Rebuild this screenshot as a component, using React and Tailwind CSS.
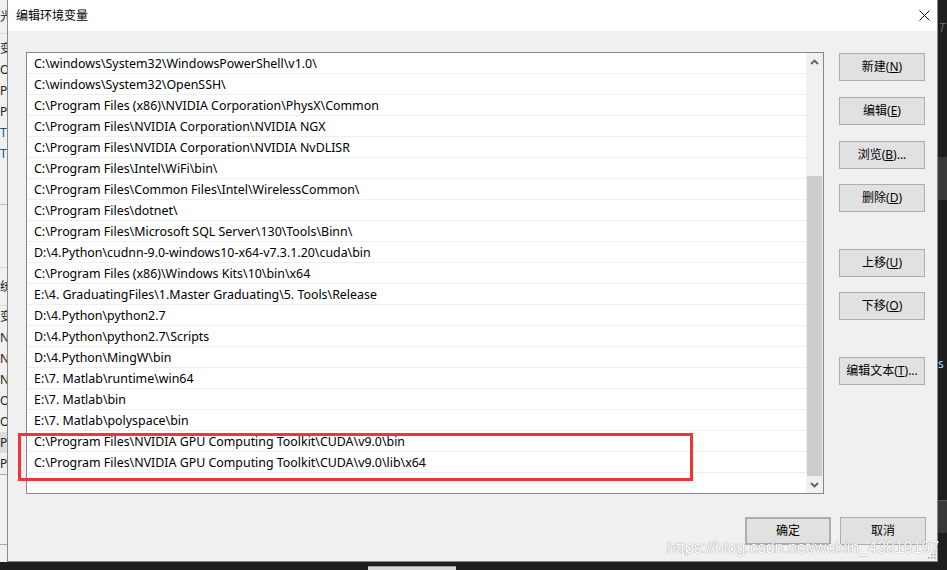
import React from 'react';

const paths = [
  'C:\\windows\\System32\\WindowsPowerShell\\v1.0\\',
  'C:\\windows\\System32\\OpenSSH\\',
  'C:\\Program Files (x86)\\NVIDIA Corporation\\PhysX\\Common',
  'C:\\Program Files\\NVIDIA Corporation\\NVIDIA NGX',
  'C:\\Program Files\\NVIDIA Corporation\\NVIDIA NvDLISR',
  'C:\\Program Files\\Intel\\WiFi\\bin\\',
  'C:\\Program Files\\Common Files\\Intel\\WirelessCommon\\',
  'C:\\Program Files\\dotnet\\',
  'C:\\Program Files\\Microsoft SQL Server\\130\\Tools\\Binn\\',
  'D:\\4.Python\\cudnn-9.0-windows10-x64-v7.3.1.20\\cuda\\bin',
  'C:\\Program Files (x86)\\Windows Kits\\10\\bin\\x64',
  'E:\\4. GraduatingFiles\\1.Master Graduating\\5. Tools\\Release',
  'D:\\4.Python\\python2.7',
  'D:\\4.Python\\python2.7\\Scripts',
  'D:\\4.Python\\MingW\\bin',
  'E:\\7. Matlab\\runtime\\win64',
  'E:\\7. Matlab\\bin',
  'E:\\7. Matlab\\polyspace\\bin',
  'C:\\Program Files\\NVIDIA GPU Computing Toolkit\\CUDA\\v9.0\\bin',
  'C:\\Program Files\\NVIDIA GPU Computing Toolkit\\CUDA\\v9.0\\lib\\x64',
];

// side buttons: label, mnemonic, suffix, top margin
const sideButtons = [
  { label: '新建', key: 'N', mt: 'mt-[1px]' },
  { label: '编辑', key: 'E', mt: 'mt-[16px]' },
  { label: '浏览', key: 'B', tail: '...', mt: 'mt-[16px]' },
  { label: '删除', key: 'D', mt: 'mt-[15px]' },
  { label: '上移', key: 'U', mt: 'mt-[37px]' },
  { label: '下移', key: 'O', mt: 'mt-[15px]' },
  { label: '编辑文本', key: 'T', tail: '...', mt: 'mt-[37px]' },
];

function WinButton({ children, className = '' }) {
  return (
    <div
      className={`w-[86px] h-[28px] flex items-center justify-center bg-[#e1e1e1] border border-[#adadad] text-[12px] text-black ${className}`}
    >
      {children}
    </div>
  );
}

function Chevron({ up }) {
  return (
    <svg width="9" height="6" viewBox="0 0 9 6">
      <path
        d={up ? 'M1 5 L4.5 1.5 L8 5' : 'M1 1 L4.5 4.5 L8 1'}
        fill="none"
        stroke="#606060"
        strokeWidth="1.8"
      />
    </svg>
  );
}

function LeftStrip() {
  const top = ['变', 'Or', 'Pa', 'Py', 'TE', 'TM'];
  const bottom = ['变', 'NV', 'NV', 'NV', 'OI', 'OS'];
  return (
    <div className="w-[7px] h-full overflow-hidden bg-[#f0f0f0] flex flex-col text-[12px] leading-none text-[#222] whitespace-nowrap">
      <div className="h-[33px] flex items-center">光</div>
      <div className="h-[1px] bg-[#d9d9d9]" />
      <div className="h-[4px]" />
      {top.map((t, i) => (
        <div key={i} className={`h-[21px] flex items-center ${i > 3 ? 'text-[#1b4f8c]' : ''}`}>
          {t}
        </div>
      ))}
      <div className="h-[40px]" />
      <div className="h-[1px] bg-[#bdbdbd]" />
      <div className="h-[62px]" />
      <div className="h-[1px] bg-[#d9d9d9]" />
      <div className="h-[37px] flex items-center">统</div>
      <div className="h-[1px] bg-[#d9d9d9]" />
      {bottom.map((t, i) => (
        <div key={i} className="h-[21px] flex items-center">
          {t}
        </div>
      ))}
      <div className="h-[21px] flex items-center bg-[#dcdcdc]">Pa</div>
      <div className="h-[21px] flex items-center">PA</div>
      <div className="h-[1px] bg-[#a8a8a8]" />
      <div className="h-[69px]" />
      <div className="h-[1px] bg-[#a8a8a8]" />
    </div>
  );
}

function RightStrip() {
  return (
    <div className="flex-1 h-full bg-[#1e1e1e] flex flex-col text-[12px] leading-none overflow-hidden">
      <div className="h-[22px]" />
      <div className="h-[16px] pl-[1px] italic text-[#6a6a6a]">T</div>
      <div className="h-[119px]" />
      <div className="h-[43px] bg-[#3a3a3a]" />
      <div className="h-[158px]" />
      <div className="h-[14px] text-[#9cdcfe]">s</div>
      <div className="h-[128px]" />
      <div className="h-[1px] bg-[#555]" />
      <div className="h-[32px] bg-[#383838]" />
    </div>
  );
}

export default function App() {
  return (
    <div className="relative w-[947px] h-[570px] bg-[#1e1e1e] overflow-hidden flex flex-col font-['Noto_Sans','Noto_Sans_CJK_SC',sans-serif]">
      <div className="flex h-[562px]">
        <LeftStrip />

        {/* Dialog */}
        <div className="relative w-[931px] h-full bg-[#f0f0f0] border-x border-b border-[#8a8a8a] flex flex-col">
          {/* Title bar */}
          <div className="h-[31px] bg-white flex items-center justify-between pl-[8px] pr-[7px]">
            <span className="text-[12px] text-black">编辑环境变量</span>
            <svg width="11" height="11" viewBox="0 0 11 11">
              <path d="M0.5 0.5 L10.5 10.5 M10.5 0.5 L0.5 10.5" stroke="#111" strokeWidth="1" />
            </svg>
          </div>

          {/* Body */}
          <div className="flex-1 flex flex-col pt-[21px] pl-[18px] pr-[11px]">
            <div className="flex items-start gap-[15px]">
              {/* List */}
              <div className="w-[798px] h-[442px] bg-white border border-[#828790] flex">
                <div className="flex-1 flex flex-col">
                  {paths.map((p) => (
                    <div
                      key={p}
                      className="h-[21px] flex items-center pl-[7px] pt-[2px] border-b border-[#efefef] text-[12.4px] text-black whitespace-nowrap"
                    >
                      {p}
                    </div>
                  ))}
                </div>
                {/* Scrollbar */}
                <div className="w-[17px] h-full bg-[#f0f0f0] flex flex-col">
                  <div className="h-[17px] flex items-center justify-center">
                    <Chevron up />
                  </div>
                  <div className="h-[106px]" />
                  <div className="h-[300px] mx-[1px] bg-[#cdcdcd]" />
                  <div className="h-[17px] flex items-center justify-center">
                    <Chevron />
                  </div>
                </div>
              </div>

              {/* Side buttons */}
              <div className="w-[86px] flex flex-col">
                {sideButtons.map((b) => (
                  <WinButton key={b.label} className={b.mt}>
                    {b.label}(<span className="underline">{b.key}</span>){b.tail}
                  </WinButton>
                ))}
              </div>
            </div>

            {/* OK / Cancel */}
            <div className="flex justify-end gap-[9px] mt-[23px]">
              <WinButton className="border-2 border-[#0078d7]">确定</WinButton>
              <WinButton>取消</WinButton>
            </div>
          </div>

          {/* Annotation box */}
          <div className="absolute left-[10px] top-[433px] w-[675px] h-[48px] border-[3px] border-[#ee3636]" />

          {/* Resize grip */}
          <svg className="absolute right-[1px] bottom-[2px]" width="9" height="9" viewBox="0 0 9 9">
            {[
              [7, 1],
              [4, 4],
              [7, 4],
              [1, 7],
              [4, 7],
              [7, 7],
            ].map(([x, y], i) => (
              <rect key={i} x={x} y={y} width="1.5" height="1.5" fill="#a0a0a0" />
            ))}
          </svg>
        </div>

        <RightStrip />
      </div>

      {/* Bottom strip */}
      <div className="h-[8px] flex">
        <div className="w-[368px]" />
        <div className="w-[88px] mt-[4px] bg-[#d8d8d8] border-t border-[#9a9a9a]" />
      </div>

      {/* Watermark */}
      <div className="absolute left-[667px] top-[540px] text-[16px] leading-none font-['Liberation_Sans',Arial,sans-serif] text-white [text-shadow:0_0_1px_rgba(0,0,0,0.4),0_0_1px_rgba(0,0,0,0.2)] whitespace-nowrap">
        https://blog.csdn.net/weixin_43819197
      </div>
    </div>
  );
}
